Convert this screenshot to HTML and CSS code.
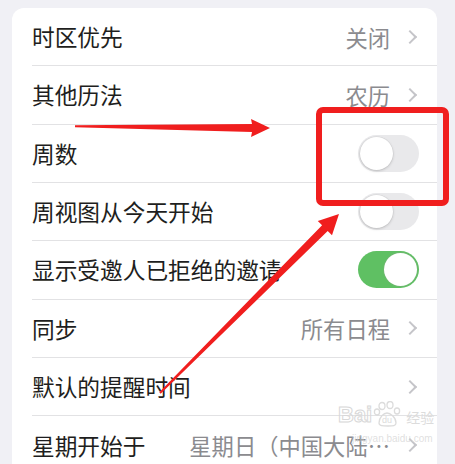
FILE: index.html
```html
<!DOCTYPE html>
<html lang="zh-CN">
<head>
<meta charset="utf-8">
<title>日历设置</title>
<link rel="stylesheet" href="styles.css">
</head>
<body>
<div class="page">
  <div class="card">
    <div class="row"><div class="cell"><span class="label">时区优先</span><span class="value">关闭</span><span class="chev"></span></div></div>
    <div class="row"><div class="cell"><span class="label">其他历法</span><span class="value">农历</span><span class="chev"></span></div></div>
    <div class="row"><div class="cell"><span class="label">周数</span><span class="toggle"><span class="knob"></span></span></div></div>
    <div class="row"><div class="cell"><span class="label">周视图从今天开始</span><span class="toggle"><span class="knob"></span></span></div></div>
    <div class="row"><div class="cell"><span class="label">显示受邀人已拒绝的邀请</span><span class="toggle on"><span class="knob"></span></span></div></div>
    <div class="row"><div class="cell"><span class="label">同步</span><span class="value">所有日程</span><span class="chev"></span></div></div>
    <div class="row"><div class="cell"><span class="label">默认的提醒时间</span><span class="chev"></span></div></div>
    <div class="row"><div class="cell"><span class="label">星期开始于</span><span class="value">星期日（中国大陆…</span><span class="chev"></span></div></div>
  </div>

  <div class="watermark">
    <div class="wm-top"><span class="wm-bai">Bai</span><span class="wm-paw"><svg width="30" height="26" viewBox="0 0 30 26"><g fill="none" stroke="#dcdcdc" stroke-width="1.3"><ellipse cx="9" cy="5" rx="3" ry="3.5"/><ellipse cx="17" cy="4" rx="3" ry="3.5"/><ellipse cx="4" cy="11" rx="2.6" ry="3"/><ellipse cx="24" cy="10" rx="2.6" ry="3"/><path d="M6 22c0-6 5-10 8-10s9 4 9 10c0 3-3 3-8 3s-9 0-9-3z"/></g><text x="9" y="22" font-size="9" fill="#dcdcdc" font-family="Liberation Sans, sans-serif">du</text></svg></span><span class="wm-cn">经验</span></div>
    <div class="wm-url">jingyan.baidu.com</div>
  </div>

  <svg class="marks" width="455" height="464" viewBox="0 0 455 464">
    <rect x="319" y="110" width="127" height="93" rx="4" ry="4" fill="none" stroke="#f01e1e" stroke-width="6"/>
    <polygon fill="#f01e1e" points="75,125.3 252,124 251,119 270,128 251,137 252,132 75,127.3"/>
    <polygon fill="#f01e1e" points="159.3,392.3 322.1,225.3 317.8,221 339,214 332,235.2 327.7,230.9 160.7,393.7"/>
  </svg>
</div>
</body>
</html>
```
FILE: styles.css
```css
* { box-sizing: border-box; }
html, body { margin: 0; padding: 0; }
body {
  background: #f0f0f5;
  font-family: "Noto Sans CJK SC", "Noto Sans", sans-serif;
  width: 455px;
  height: 464px;
  overflow: hidden;
}
.page {
  position: relative;
  width: 455px;
  height: 464px;
  padding: 8px 18px 0 12px;
}
.card {
  background: #ffffff;
  border-radius: 12px;
  width: 425px;
  overflow: hidden;
}
.row {
  height: 58.33px;
  padding-left: 20px;
  display: flex;
}
.cell {
  flex: 1;
  display: flex;
  align-items: center;
  padding-right: 19px;
  border-bottom: 1px solid #e2e2e4;
}
.row:last-child .cell { border-bottom: none; }
.label {
  flex: 1;
  font-size: 22.7px;
  color: #1e1e20;
  white-space: nowrap;
}
.value {
  font-size: 22.3px;
  color: #8b8b8f;
  margin-right: 15px;
  white-space: nowrap;
}
.chev {
  width: 10px;
  height: 10px;
  border-top: 2px solid #c5c5c9;
  border-right: 2px solid #c5c5c9;
  transform: rotate(45deg);
  margin-right: 3px;
}
.toggle {
  width: 61px;
  height: 37px;
  border-radius: 19px;
  background: #e9e9eb;
  position: relative;
  margin-right: -1px;
}
.toggle .knob {
  position: absolute;
  left: 2px;
  top: 2px;
  width: 33px;
  height: 33px;
  border-radius: 50%;
  background: #ffffff;
  box-shadow: 0 1px 3px rgba(0,0,0,0.18), 0 0 0 0.5px rgba(0,0,0,0.06);
}
.toggle.on { background: #5fc063; }
.toggle.on .knob { left: 26px; box-shadow: 0 0 0 1px #6cb86e; }
.watermark {
  position: absolute;
  left: 338px;
  top: 401px;
  color: #dcdcdc;
  font-family: "Liberation Sans", sans-serif;
}
.wm-top { display: flex; align-items: flex-end; gap: 1px; }
.wm-bai { font-size: 22px; font-weight: bold; line-height: 24px; color: transparent; -webkit-text-stroke: 1px #d8d8d8; }
.wm-paw { display: block; height: 26px; }
.wm-cn { font-family: "Noto Sans CJK SC", sans-serif; font-size: 14px; color: #dcdcdc; margin-left: 2px; line-height: 20px; }
.wm-url { font-size: 10px; color: rgba(210,210,210,0.7); margin-left: 14px; margin-top: 6px; }
.marks {
  position: absolute;
  left: 0;
  top: 0;
  pointer-events: none;
}
```
